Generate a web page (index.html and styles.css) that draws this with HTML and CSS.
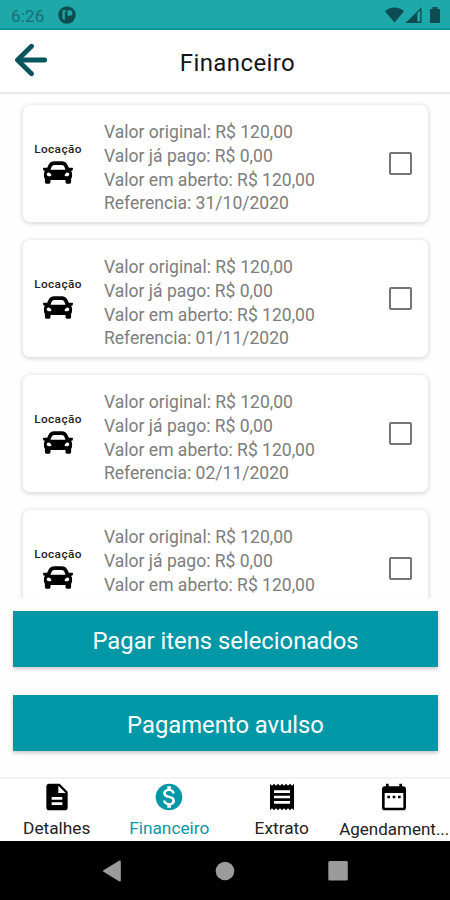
FILE: index.html
```html
<!DOCTYPE html>
<html lang="pt-BR">
<head>
<meta charset="utf-8">
<title>Financeiro</title>
<link rel="stylesheet" href="styles.css">
</head>
<body>
<svg width="0" height="0" class="defs">
  <symbol id="car" viewBox="0 64 512 384"><path d="M499.99 176h-59.87l-16.64-41.6C406.38 91.63 365.57 64 319.5 64h-127c-46.06 0-86.88 27.63-103.99 70.4L71.87 176H12.01C4.2 176-1.53 183.34.37 190.91l6 24C7.7 220.25 12.5 224 18.01 224h20.07C24.65 235.73 16 252.78 16 272v48c0 16.12 6.16 30.67 16 41.93V416c0 17.67 14.33 32 32 32h32c17.67 0 32-14.33 32-32v-32h256v32c0 17.67 14.33 32 32 32h32c17.67 0 32-14.33 32-32v-54.07c9.84-11.25 16-25.8 16-41.93v-48c0-19.22-8.65-36.27-22.07-48H494c5.51 0 10.31-3.75 11.64-9.09l6-24c1.89-7.57-3.84-14.91-11.65-14.91zm-352.06-17.83c7.29-18.22 24.94-30.17 44.57-30.17h127c19.63 0 37.28 11.95 44.57 30.17L384 208H128l19.93-49.83zM96 319.8c-19.2 0-32-12.76-32-31.9S76.8 256 96 256s48 28.71 48 47.85-28.8 15.95-48 15.95zm320 0c-19.2 0-48 3.19-48-15.95S396.8 256 416 256s32 12.76 32 31.9-12.8 31.9-32 31.9z"/></symbol>
</svg>
<div class="screen">
  <div class="status">
    <span class="time">6:26</span>
    <svg class="app-dot" width="18" height="18" viewBox="0 0 18 18"><circle cx="9" cy="9" r="8.7" fill="#0d4d52"/><path d="M4.500 4.300H8v1.500H6.800v8.500a7 7 0 0 1-2.300-2zM9.500 4.300h2.200a2.700 2.700 0 0 1 0 5.400H9.500z" fill="#1fa8aa"/></svg>
    <svg class="signals" width="56" height="18" viewBox="0 0 56 18"><path d="M0 5.2C5.500 .2 13.500.2 19 5.200L9.500 16.500z" fill="#0d4d52"/><path d="M20.500 17L36.500 1.300V17z" fill="#0d4d52"/><path d="M32.300 7v8.500h2.900V4.500z" fill="#1fa8aa"/><path d="M45 3h2.500V1h5v2H55v14H45z" fill="#0d4d52"/></svg>
  </div>
  <header class="header">
    <svg class="back" width="34" height="34" viewBox="0 0 34 34" fill="none" stroke="#07565d" stroke-width="4.800" stroke-linecap="round" stroke-linejoin="round"><path d="M17.500 3.200L3.500 17l14 13.700"/><path d="M4 17h26.800"/></svg>
    <h1>Financeiro</h1>
  </header>
  <main class="list">
    <article class="card">
      <div class="kind"><span>Locação</span><svg width="30" height="23"><use href="#car"/></svg></div>
      <div class="info"><p>Valor original: R$ 120,00</p><p>Valor já pago: R$ 0,00</p><p>Valor em aberto: R$ 120,00</p><p>Referencia: 31/10/2020</p></div>
      <span class="check"></span>
    </article>
    <article class="card">
      <div class="kind"><span>Locação</span><svg width="30" height="23"><use href="#car"/></svg></div>
      <div class="info"><p>Valor original: R$ 120,00</p><p>Valor já pago: R$ 0,00</p><p>Valor em aberto: R$ 120,00</p><p>Referencia: 01/11/2020</p></div>
      <span class="check"></span>
    </article>
    <article class="card">
      <div class="kind"><span>Locação</span><svg width="30" height="23"><use href="#car"/></svg></div>
      <div class="info"><p>Valor original: R$ 120,00</p><p>Valor já pago: R$ 0,00</p><p>Valor em aberto: R$ 120,00</p><p>Referencia: 02/11/2020</p></div>
      <span class="check"></span>
    </article>
    <article class="card">
      <div class="kind"><span>Locação</span><svg width="30" height="23"><use href="#car"/></svg></div>
      <div class="info"><p>Valor original: R$ 120,00</p><p>Valor já pago: R$ 0,00</p><p>Valor em aberto: R$ 120,00</p></div>
      <span class="check"></span>
    </article>
  </main>
  <div class="actions">
    <div class="btn">Pagar itens selecionados</div>
    <div class="btn">Pagamento avulso</div>
  </div>
  <nav class="tabs">
    <div class="tab"><svg viewBox="0 0 24 24"><path d="M14 2H6c-1.100 0-1.990.9-1.990 2L4 20c0 1.100.89 2 1.990 2H18c1.100 0 2-.9 2-2V8l-6-6zm2 16H8v-2h8v2zm0-4H8v-2h8v2zm-3-5V3.500L18.500 9H13z"/></svg><span>Detalhes</span></div>
    <div class="tab active"><svg viewBox="0 0 24 24"><path d="M12 2C6.480 2 2 6.480 2 12s4.480 10 10 10 10-4.480 10-10S17.520 2 12 2zm1.410 16.090V20h-2.670v-1.930c-1.710-.36-3.160-1.460-3.270-3.400h1.960c.1 1.050.82 1.870 2.650 1.870 1.960 0 2.400-.98 2.400-1.590 0-.83-.44-1.610-2.670-2.140-2.480-.6-4.180-1.620-4.180-3.670 0-1.720 1.390-2.840 3.110-3.210V4h2.670v1.950c1.860.45 2.790 1.860 2.850 3.390H14.300c-.05-1.110-.64-1.870-2.220-1.870-1.500 0-2.400.68-2.400 1.640 0 .84.65 1.390 2.670 1.910s4.180 1.390 4.180 3.910c-.01 1.830-1.380 2.830-3.120 3.160z"/></svg><span>Financeiro</span></div>
    <div class="tab"><svg viewBox="0 0 24 24"><path d="M18 17H6v-2h12v2zm0-4H6v-2h12v2zm0-4H6V7h12v2zM3 22l1.500-1.500L6 22l1.500-1.500L9 22l1.500-1.500L12 22l1.500-1.500L15 22l1.500-1.500L18 22l1.500-1.500L21 22V2l-1.500 1.500L18 2l-1.500 1.500L15 2l-1.500 1.500L12 2l-1.500 1.500L9 2 7.500 3.500 6 2 4.500 3.500 3 2v20z"/></svg><span>Extrato</span></div>
    <div class="tab last"><svg viewBox="0 0 24 24"><path d="M9 11H7v2h2v-2zm4 0h-2v2h2v-2zm4 0h-2v2h2v-2zm2-7h-1V2h-2v2H8V2H6v2H5c-1.110 0-1.990.9-1.990 2L3 20c0 1.100.89 2 2 2h14c1.100 0 2-.9 2-2V6c0-1.100-.9-2-2-2zm0 16H5V9h14v11z"/></svg><span>Agendament...</span></div>
  </nav>
  <div class="softkeys">
    <svg viewBox="0 0 20 22"><path d="M1.500 10.200L17 .8q1.800-.8 1.800 1v18.400q0 1.800-1.800 1L1.500 11.800q-1.300-.8 0-1.600z"/></svg>
    <svg viewBox="0 0 20 22"><circle cx="10" cy="11" r="9.300"/></svg>
    <svg viewBox="0 0 20 22"><rect x=".3" y="1" width="19.500" height="19.500" rx="1.500"/></svg>
  </div>
</div>
</body>
</html>
```

FILE: styles.css
```css
* { box-sizing: border-box; margin: 0; padding: 0; }
body { font-family: Roboto, sans-serif; background: #fefefe; }
svg { display: block; flex: none; }
.defs { position: absolute; }
.screen { width: 450px; height: 900px; display: flex; flex-direction: column; overflow: hidden; }
.status { height: 30px; flex: none; display: flex; align-items: center; padding: 1px 9px 0 11px; background: #1fa8aa; border-bottom: 2px solid #0b999c; color: #176f74; }
.time { font-size: 17px; line-height: 20px; letter-spacing: .2px; width: 47px; white-space: nowrap; margin-top: 2px; }
.app-dot { margin-top: 1px; }
.signals { margin-left: auto; margin-top: 1px; }
.header { height: 64px; flex: none; display: flex; align-items: center; padding-left: 14px; background: #fff; border-bottom: 2px solid #e8e8e8; }
.back { margin-top: -2px; }
h1 { flex: 1; text-align: center; padding-right: 23px; font-size: 24px; font-weight: 400; line-height: 30px; letter-spacing: .4px; color: #161616; padding-top: 3px; }
.list { height: 504px; flex: none; overflow: hidden; padding: 11px 22px 0 23px; display: flex; flex-direction: column; gap: 18px; }
.card { height: 117px; flex: none; display: flex; align-items: flex-start; background: #fff; border-radius: 7px; box-shadow: 0 1px 4px 1px rgba(0,0,0,.14); }
.kind { width: 70px; padding-top: 37px; display: flex; flex-direction: column; align-items: center; font-size: 11.800px; font-weight: 500; line-height: 15px; letter-spacing: .4px; color: #222; }
.kind svg { margin-top: 4px; fill: #000; }
.info { width: 273px; padding: 16px 0 0 11px; font-size: 17.550px; line-height: 23.800px; color: #7d7d7d; white-space: nowrap; }
.check { width: 23px; height: 23px; margin-top: 47px; border: 2px solid #747474; border-radius: 2px; margin-left: 23px; }
.actions { height: 179px; flex: none; padding: 14px 12px 0 13px; display: flex; flex-direction: column; gap: 28px; }
.btn { height: 56px; margin-top: -1px; margin-bottom: 1px; display: flex; align-items: center; justify-content: center; padding-top: 3px; background: #0097a7; color: #fff; font-size: 23.800px; line-height: 30px; box-shadow: 0 2px 4px rgba(0,0,0,.22); }
.tabs { height: 64px; flex: none; display: grid; grid-template-columns: repeat(4, 1fr); background: #fff; border-top: 2px solid #f3f3f3; }
.tab { display: flex; flex-direction: column; align-items: center; padding: 2px 0 0 1px; font-size: 17.300px; line-height: 20px; color: #222; fill: #000; white-space: nowrap; }
.tab svg { width: 32px; height: 32px; }
.tab span { margin-top: 5px; }
.last { font-size: 17px; }
.last span { margin-top: 6px; }
.active { color: #0b97a7; fill: #0097a7; }
.softkeys { height: 59px; flex: none; background: #000; display: flex; justify-content: center; align-items: center; gap: 93px; fill: #9b9b9b; }
.softkeys svg { width: 20px; height: 22px; }
```
